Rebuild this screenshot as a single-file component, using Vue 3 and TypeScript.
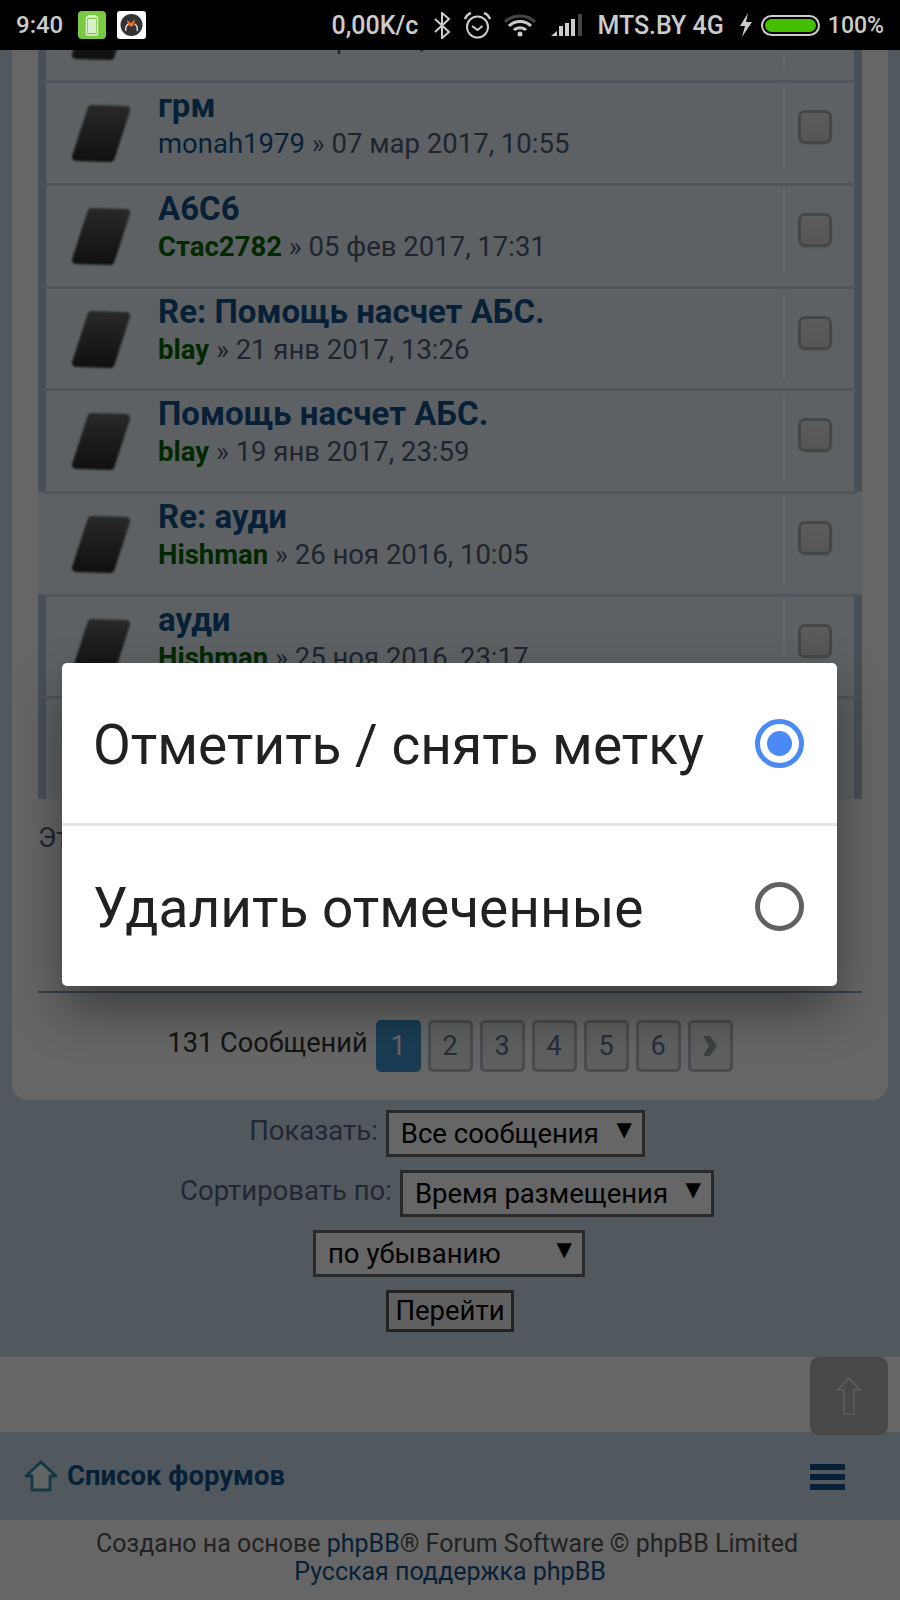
<script setup lang="ts">
interface Post {
  title: string
  author: string
  authorKind: 'link' | 'green'
  date: string
  plain?: boolean
}

const posts: Post[] = [
  { title: 'Re: тема', author: 'Антон', authorKind: 'link', date: '10 мар 2017, 12:00' },
  { title: 'грм', author: 'monah1979', authorKind: 'link', date: '07 мар 2017, 10:55' },
  { title: 'А6С6', author: 'Стас2782', authorKind: 'green', date: '05 фев 2017, 17:31' },
  { title: 'Re: Помощь насчет АБС.', author: 'blay', authorKind: 'green', date: '21 янв 2017, 13:26' },
  { title: 'Помощь насчет АБС.', author: 'blay', authorKind: 'green', date: '19 янв 2017, 23:59' },
  { title: 'Re: ауди', author: 'Hishman', authorKind: 'green', date: '26 ноя 2016, 10:05', plain: true },
  { title: 'ауди', author: 'Hishman', authorKind: 'green', date: '25 ноя 2016, 23:17' },
  { title: 'ауди', author: 'Hishman', authorKind: 'green', date: '25 ноя 2016, 22:40' }
]

const pages = [1, 2, 3, 4, 5, 6]
</script>

<template>
  <div class="screen">
    <header class="status">
      <span class="time">9:40</span>
      <svg class="app-icon first" width="28" height="28" viewBox="0 0 28 28">
        <rect width="28" height="28" rx="4" fill="#7ac943" />
        <rect x="10" y="4" width="8" height="2" fill="#d6efc4" />
        <rect x="8.5" y="6" width="11" height="18" rx="1" fill="none" stroke="#e2f4d5" stroke-width="1.4" />
        <rect x="10" y="8" width="8" height="14" fill="#d8f0c8" />
      </svg>
      <svg class="app-icon" width="29" height="28" viewBox="0 0 29 28">
        <rect width="29" height="28" rx="3" fill="#fff" />
        <circle cx="14.5" cy="14" r="11" fill="#333" />
        <path d="M10 9l4 3 4-4-1 6-3 2-3-2z" fill="#ef6c22" />
        <path d="M9 20c-1-3 0-5 2-7M20 20c1-3 0-5-2-7" stroke="#ddd" stroke-width="1.4" fill="none" />
      </svg>

      <span class="spacer"></span>

      <span class="speed">0,00K/с</span>
      <svg class="st-ic bt" width="18" height="27" viewBox="0 0 18 27">
        <path d="M2 7l14 13-7 6V1l7 6L2 20" fill="none" stroke="#ccc" stroke-width="2" />
      </svg>
      <svg class="st-ic alarm" width="27" height="27" viewBox="0 0 27 27">
        <circle cx="13.5" cy="15" r="10.5" fill="none" stroke="#ccc" stroke-width="2" />
        <path d="M8 14l5.500 4 5-4" fill="none" stroke="#ccc" stroke-width="2" />
        <path d="M1 7c1-3 3-5 6-6M26 7c-1-3-3-5-6-6" fill="none" stroke="#ccc" stroke-width="2.400" />
      </svg>
      <svg class="st-ic wifi" width="32" height="24" viewBox="0 0 32 24">
        <path d="M1 9c8-8 22-8 30 0" fill="none" stroke="#444" stroke-width="3" />
        <path d="M5 13c6-6 16-6 22 0" fill="none" stroke="#ccc" stroke-width="3" />
        <path d="M10 17c3-3 9-3 12 0" fill="none" stroke="#ccc" stroke-width="3" />
        <circle cx="16" cy="21" r="2.500" fill="#ccc" />
      </svg>
      <svg class="st-ic signal" width="32" height="22" viewBox="0 0 32 22">
        <path d="M0 22l6-5v5z" fill="#ccc" />
        <rect x="8" y="12" width="4" height="10" fill="#ccc" />
        <rect x="14" y="9" width="4" height="13" fill="#ccc" />
        <rect x="20" y="5" width="4" height="17" fill="#ccc" />
        <rect x="27" y="0" width="4" height="22" fill="#444" />
      </svg>
      <span class="carrier">MTS.BY 4G</span>
      <svg class="st-ic bolt" width="14" height="24" viewBox="0 0 14 24">
        <path d="M9 0L1 13h5l-3 11 10-15H7z" fill="#ccc" />
      </svg>
      <span class="battery"><span class="battery-fill"></span></span>
      <span class="percent">100%</span>
    </header>

    <div class="page">
      <main class="card">
        <ul class="posts">
          <li v-for="(post, i) in posts" :key="i" class="post" :class="{ plain: post.plain }">
            <svg class="topic-icon" width="62" height="61" viewBox="0 0 60 60" preserveAspectRatio="none">
              <defs>
                <linearGradient :id="'ic' + i" x1="0" y1="0" x2="0" y2="1">
                  <stop offset="0" stop-color="#666" />
                  <stop offset="1" stop-color="#282828" />
                </linearGradient>
              </defs>
              <path d="M21 3L55 4Q59 5 58 9L43 56Q42 59 39 59L6 58Q1 57 2 53L17 6Q18 3 21 3Z" :fill="`url(#ic${i})`" />
            </svg>
            <div class="post-text">
              <a class="post-title">{{ post.title }}</a>
              <div class="post-meta">
                <a :class="post.authorKind">{{ post.author }}</a> » {{ post.date }}
              </div>
            </div>
            <div class="mark"><span class="check"></span></div>
          </li>
        </ul>

        <p class="note">Эта тема закрыта</p>

        <hr class="rule" />

        <nav class="pagination">
          <span class="count">131 Сообщений</span>
          <span v-for="p in pages" :key="p" class="pg" :class="{ active: p === 1 }">{{ p }}</span>
          <span class="pg next">
            <svg width="16" height="24" viewBox="0 0 16 24">
              <path d="M1 2h7l7 10-7 10H1l6-10z" fill="#9aa0a6" />
            </svg>
          </span>
        </nav>
      </main>

      <form class="sort-form" @submit.prevent>
        <div class="form-row labelled">
          <label>Показать:</label>
          <div class="sel sel-show"><span>Все сообщения</span><span class="arrow">▼</span></div>
        </div>
        <div class="form-row labelled">
          <label>Сортировать по:</label>
          <div class="sel sel-sort"><span>Время размещения</span><span class="arrow">▼</span></div>
        </div>
        <div class="form-row">
          <div class="sel sel-dir"><span>по убыванию</span><span class="arrow">▼</span></div>
        </div>
        <div class="form-row">
          <button class="go" type="submit">Перейти</button>
        </div>
      </form>

      <div class="band"></div>

      <nav class="forum-nav">
        <a class="home">
          <svg class="home-icon" width="34" height="32" viewBox="0 0 34 32">
            <path d="M17 2L32 16H26V30H8V16H2Z" fill="#f4fff8" stroke="#2f8fa8" stroke-width="2.800" stroke-linejoin="round" />
          </svg>
          <span>Список форумов</span>
        </a>
        <span class="burger"><i></i><i></i><i></i></span>
      </nav>

      <footer class="foot">
        <div class="foot-first">Создано на основе <a>phpBB</a>® Forum Software © phpBB Limited</div>
        <div><a>Русская поддержка phpBB</a></div>
      </footer>

      <div class="to-top">
        <svg width="26" height="40" viewBox="0 0 26 40">
          <path d="M13 2L24 14H18V38H8V14H2Z" fill="none" stroke="#e8e8e8" stroke-width="1.600" />
        </svg>
      </div>
    </div>

    <div class="scrim"></div>

    <div class="dialog">
      <div class="option">
        <span>Отметить / снять метку</span>
        <span class="radio on"></span>
      </div>
      <div class="option second">
        <span>Удалить отмеченные</span>
        <span class="radio"></span>
      </div>
    </div>
  </div>
</template>

<style>
html,
body {
  margin: 0;
  background: #000;
}
</style>

<style scoped>
.screen {
  position: relative;
  width: 900px;
  height: 1600px;
  overflow: hidden;
  font-family: Roboto, "Noto Sans", sans-serif;
}

.status {
  position: relative;
  z-index: 3;
  display: flex;
  align-items: center;
  height: 50px;
  padding: 0 16px;
  box-sizing: border-box;
  background: #000;
  color: #ccc;
  font-size: 23px;
  font-weight: 500;
}

.time {
  font-size: 24px;
}
.speed,
.carrier {
  font-size: 25px;
}

.app-icon {
  margin-left: 11px;
}
.app-icon.first {
  margin-left: 15px;
}
.spacer {
  flex: 1;
}
.st-ic {
  flex: none;
}
.bt {
  margin-left: 15px;
}
.alarm {
  margin-left: 13px;
}
.wifi {
  margin-left: 13px;
}
.signal {
  margin-left: 15px;
}
.carrier {
  margin-left: 14px;
}
.bolt {
  margin-left: 15px;
}
.battery {
  display: block;
  width: 59px;
  height: 21px;
  margin-left: 8px;
  padding: 2px;
  box-sizing: border-box;
  border: 2px solid #ccc;
  border-radius: 11px;
}
.battery-fill {
  display: block;
  height: 100%;
  border-radius: 7px;
  background: #45c000;
}
.percent {
  margin-left: 8px;
}

.page {
  position: relative;
  height: 1550px;
  overflow: hidden;
  background: #cadceb;
}

.card {
  margin: -72.2px 12px 0;
  padding: 0 26px;
  height: 1122px;
  box-sizing: border-box;
  background: #fff;
  border-radius: 0 0 16px 16px;
}

.posts {
  margin: 0;
  padding: 0;
  list-style: none;
}

.post {
  display: flex;
  align-items: stretch;
  height: 102.67px;
  box-sizing: border-box;
  border: solid #b4c6d6;
  border-width: 3px 8px 0;
  border-top-color: #c5d5e1;
  background: #ecf3f7;
}
.post.plain {
  border-left-color: #ecf3f7;
  border-right-color: #ecf3f7;
}

.topic-icon {
  flex: none;
  margin: 19px 0 0 24px;
  filter: blur(1px);
}

.post-text {
  flex: 1;
  min-width: 0;
  padding: 4px 0 0 26px;
}

.post-title {
  display: block;
  color: #105289;
  font-size: 33px;
  font-weight: 700;
  line-height: 38px;
}

.post-meta {
  margin-top: 2px;
  color: #4c5d77;
  font-size: 27.5px;
  line-height: 34px;
}
.post:first-child .post-meta {
  margin-top: -1px;
}
.post-meta .link {
  color: #105289;
}
.post-meta .green {
  color: #006600;
  font-weight: 700;
}

.mark {
  flex: none;
  width: 71px;
  height: 88px;
  margin-top: 2px;
  box-sizing: border-box;
  border-left: 2px solid #fff;
  padding: 25px 0 0 13px;
}

.check {
  display: block;
  width: 34px;
  height: 34px;
  box-sizing: border-box;
  border: 3px solid #adb0b2;
  border-radius: 7px;
  background: linear-gradient(#e6e6e6, #d6d6d6);
  box-shadow: 0 1px 2px rgba(0, 0, 0, 0.1);
}

.note {
  margin: 25px 0 0;
  height: 167px;
  color: #536482;
  font-size: 27px;
  line-height: 28px;
}

.rule {
  margin: 0;
  border: 0;
  height: 2px;
  background: #8fa6b8;
}

.pagination {
  display: flex;
  justify-content: center;
  align-items: center;
  gap: 7px;
  margin-top: 27px;
}

.count {
  margin-right: 1px;
  margin-bottom: 6px;
  color: #333;
  font-size: 27.2px;
}

.pg {
  display: flex;
  align-items: center;
  justify-content: center;
  width: 45px;
  height: 52px;
  box-sizing: border-box;
  border: 3px solid #b8bcc2;
  border-radius: 5px;
  background: #ecedee;
  color: #5c758c;
  font-size: 27px;
}
.pg.active {
  border-color: #4296cc;
  background: #4296cc;
  color: #fff;
}

.sort-form {
  padding-top: 10px;
  color: #536482;
  font-size: 27.5px;
}

.form-row {
  display: flex;
  justify-content: center;
  align-items: center;
  gap: 8px;
  height: 47px;
  margin-bottom: 13px;
}
.form-row.labelled {
  padding-right: 6px;
}
.form-row label {
  position: relative;
  top: -3px;
}

.sel {
  display: flex;
  justify-content: space-between;
  align-items: center;
  height: 47px;
  padding: 0 10px 0 12px;
  box-sizing: border-box;
  border: 3px solid #666;
  background: #fff;
  color: #000;
}
.sel-show {
  width: 259px;
}
.sel-sort {
  width: 314px;
}
.sel-dir {
  width: 272px;
  margin-right: 2px;
}
.arrow {
  position: relative;
  top: -4px;
  font-family: "DejaVu Sans", sans-serif;
  font-size: 20px;
}

.go {
  height: 42px;
  width: 128px;
  margin-top: -5px;
  padding: 0;
  border: 3px solid #555;
  background: #f0f0f0;
  color: #000;
  font: inherit;
}

.band {
  height: 75px;
  margin-top: 20px;
  background: #fff;
}

.forum-nav {
  display: flex;
  justify-content: space-between;
  align-items: center;
  height: 88px;
  padding: 0 55px 0 24px;
}

.home {
  display: flex;
  align-items: center;
  gap: 9px;
  color: #105289;
  font-size: 27.5px;
  font-weight: 700;
}
.home-icon {
  filter: blur(0.4px);
}

.burger {
  display: flex;
  flex-direction: column;
  gap: 4px;
  width: 35px;
  margin-top: 3px;
}
.burger i {
  display: block;
  height: 6px;
  background: #105289;
}

.foot {
  height: 80px;
  padding-top: 10px;
  box-sizing: border-box;
  background: #fff;
  color: #555;
  font-size: 25px;
  line-height: 28px;
  text-align: center;
}
.foot a {
  color: #105289;
}
.foot-first {
  padding-right: 6px;
}

.to-top {
  position: absolute;
  top: 1307px;
  left: 810px;
  display: flex;
  align-items: center;
  justify-content: center;
  width: 78px;
  height: 78px;
  border-radius: 9px;
  background: #b4b4b4;
}

.scrim {
  position: absolute;
  inset: 50px 0 0;
  z-index: 1;
  background: rgba(0, 0, 0, 0.6);
}

.dialog {
  position: absolute;
  top: 663px;
  left: 62px;
  z-index: 2;
  width: 775px;
  border-radius: 5px;
  background: #fff;
  box-shadow: 0 24px 50px rgba(0, 0, 0, 0.4);
}

.option {
  display: flex;
  justify-content: space-between;
  align-items: center;
  height: 160px;
  padding: 4px 33px 0 31px;
  box-sizing: border-box;
  color: #212121;
  font-size: 55px;
}
.option.second {
  height: 163px;
  padding-top: 3px;
  border-top: 3px solid #e4e4e4;
}

.radio {
  display: block;
  flex: none;
  width: 49px;
  height: 49px;
  margin-top: -2px;
  box-sizing: border-box;
  border: 5px solid #616161;
  border-radius: 50%;
}
.radio.on {
  margin-top: -4px;
  padding: 7px;
  border-color: #4a8af4;
  background: #4a8af4 content-box;
}
</style>
